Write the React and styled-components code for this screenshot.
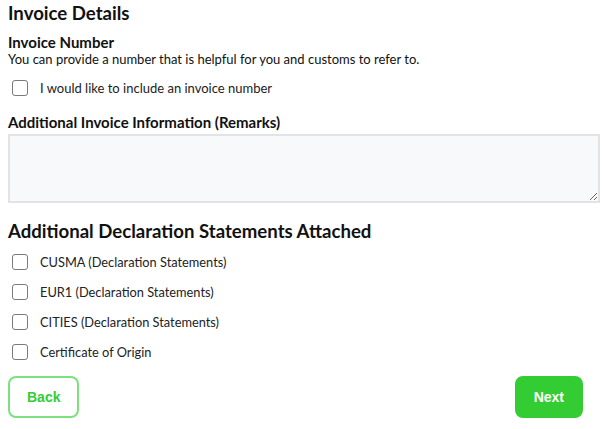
import React from "react";
import styled, { createGlobalStyle } from "styled-components";

const GlobalStyle = createGlobalStyle`
  body {
    margin: 0;
    background: #ffffff;
    font-family: "Lato", "Open Sans", sans-serif;
    color: #111111;
  }
`;

const Page = styled.div`
  padding: 0 7px 0 8px;
`;

const Title = styled.h2`
  margin: 0;
  font-size: 18.6px;
  line-height: 26px;
  font-weight: 700;
`;

const FieldTitle = styled.h3`
  margin: ${(p) => (p.$gap ? "15px" : "7px")} 0 0;
  font-size: 15px;
  line-height: 18px;
  font-weight: 700;
`;

const Help = styled.p`
  margin: 0;
  font-size: 13px;
  line-height: 17px;
`;

const CheckList = styled.div`
  display: flex;
  flex-direction: column;
  gap: 10px;
  margin-top: ${(p) => p.$top || "10px"};
`;

const CheckRow = styled.label`
  display: flex;
  align-items: center;
  gap: 12px;
  height: 20px;
  padding-left: 4px;
  font-size: ${(p) => p.$size || "12.8px"};
  color: #222222;
`;

const Box = styled.input.attrs({ type: "checkbox" })`
  appearance: none;
  margin: 0;
  width: 16px;
  height: 16px;
  border: 1px solid #7a7a7a;
  border-radius: 3px;
  background: #ffffff;
`;

const Remarks = styled.textarea`
  display: block;
  box-sizing: border-box;
  width: 100%;
  height: 69px;
  margin-top: 3px;
  border: 2px solid #e1e3e7;
  background: #f8f9fb;
  resize: vertical;
`;

const SectionTitle = styled.h2`
  margin: 16px 0 0;
  font-size: 18.6px;
  line-height: 24px;
  font-weight: 700;
`;

const Actions = styled.div`
  display: flex;
  justify-content: space-between;
  margin-top: 14px;
  padding-right: 17px;
`;

const Button = styled.button`
  box-sizing: border-box;
  height: 42px;
  padding: 0 17px;
  border-radius: 8px;
  border: 2px solid ${(p) => (p.$primary ? "#33cd33" : "#7ee07e")};
  background: ${(p) => (p.$primary ? "#33cd33" : "#ffffff")};
  color: ${(p) => (p.$primary ? "#ffffff" : "#33cd33")};
  font-family: "Liberation Sans", Arial, sans-serif;
  font-size: 14px;
  font-weight: 700;
`;

const statements = [
  "CUSMA (Declaration Statements)",
  "EUR1 (Declaration Statements)",
  "CITIES (Declaration Statements)",
  "Certificate of Origin",
];

export default function App() {
  return (
    <Page>
      <GlobalStyle />
      <Title>Invoice Details</Title>
      <FieldTitle>Invoice Number</FieldTitle>
      <Help>You can provide a number that is helpful for you and customs to refer to.</Help>
      <CheckList>
        <CheckRow $size="13px">
          <Box />
          I would like to include an invoice number
        </CheckRow>
      </CheckList>
      <FieldTitle $gap>Additional Invoice Information (Remarks)</FieldTitle>
      <Remarks />
      <SectionTitle>Additional Declaration Statements Attached</SectionTitle>
      <CheckList $top="9px">
        {statements.map((s) => (
          <CheckRow key={s}>
            <Box />
            {s}
          </CheckRow>
        ))}
      </CheckList>
      <Actions>
        <Button>Back</Button>
        <Button $primary>Next</Button>
      </Actions>
    </Page>
  );
}
